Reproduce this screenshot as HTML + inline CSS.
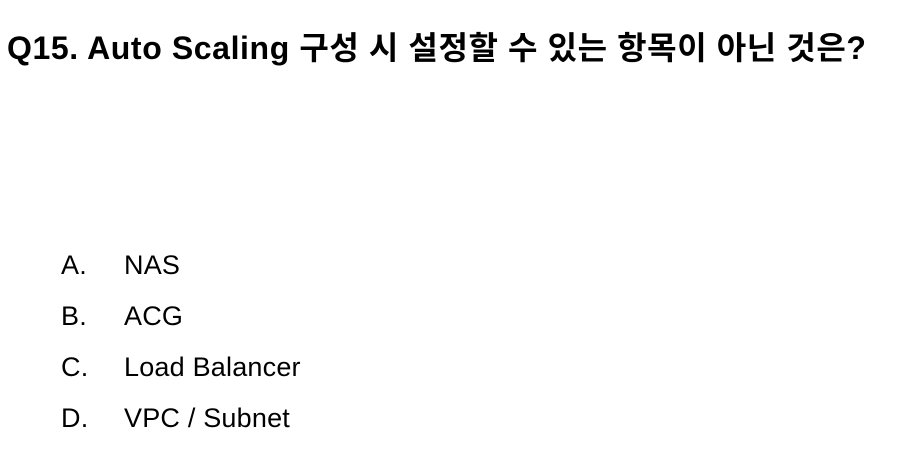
<!DOCTYPE html>
<html><head><meta charset="utf-8"><style>
body{margin:0;width:898px;height:466px;background:#fff;overflow:hidden;font-family:"Liberation Sans","Noto Sans CJK KR",sans-serif;color:#000;position:relative}
.t{position:absolute;left:7px;top:27px;font-size:32px;font-weight:bold;white-space:nowrap;line-height:42px;letter-spacing:0.6px}
.o{position:absolute;font-size:27px;line-height:32px;white-space:nowrap;letter-spacing:0.2px}
.l{left:61px}.v{left:124px}
</style></head><body>
<div class="t">Q15. Auto Scaling 구성 시 설정할 수 있는 항목이 아닌 것은?</div>
<div class="o l" style="top:249px">A.</div><div class="o v" style="top:249px">NAS</div>
<div class="o l" style="top:300px">B.</div><div class="o v" style="top:300px">ACG</div>
<div class="o l" style="top:351px">C.</div><div class="o v" style="top:351px">Load Balancer</div>
<div class="o l" style="top:402px">D.</div><div class="o v" style="top:402px">VPC / Subnet</div>
</body></html>
